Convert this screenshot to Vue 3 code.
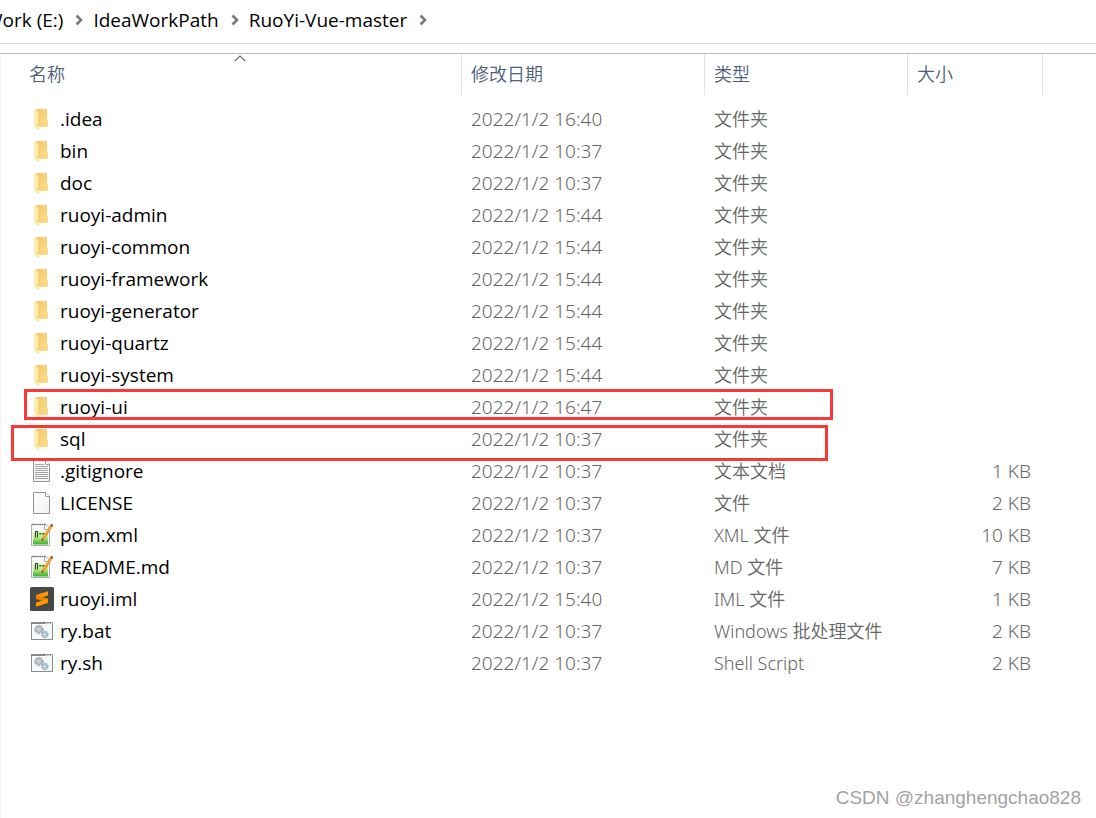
<script setup>
const crumbs = ['Work (E:)', 'IdeaWorkPath', 'RuoYi-Vue-master']

const headers = [
  { label: '名称', key: 'name' },
  { label: '修改日期', key: 'date' },
  { label: '类型', key: 'type' },
  { label: '大小', key: 'size' },
]

const folder = (name, time) => ({ name, time, icon: 'folder', type: '文件夹', size: '' })

const files = [
  folder('.idea', '16:40'),
  folder('bin', '10:37'),
  folder('doc', '10:37'),
  folder('ruoyi-admin', '15:44'),
  folder('ruoyi-common', '15:44'),
  folder('ruoyi-framework', '15:44'),
  folder('ruoyi-generator', '15:44'),
  folder('ruoyi-quartz', '15:44'),
  folder('ruoyi-system', '15:44'),
  folder('ruoyi-ui', '16:47'),
  folder('sql', '10:37'),
  { name: '.gitignore', time: '10:37', icon: 'text', type: '文本文档', size: '1 KB' },
  { name: 'LICENSE', time: '10:37', icon: 'blank', type: '文件', size: '2 KB' },
  { name: 'pom.xml', time: '10:37', icon: 'notepad', type: 'XML 文件', size: '10 KB' },
  { name: 'README.md', time: '10:37', icon: 'notepad', type: 'MD 文件', size: '7 KB' },
  { name: 'ruoyi.iml', time: '15:40', icon: 'sublime', type: 'IML 文件', size: '1 KB' },
  { name: 'ry.bat', time: '10:37', icon: 'script', type: 'Windows 批处理文件', size: '2 KB' },
  { name: 'ry.sh', time: '10:37', icon: 'script', type: 'Shell Script', size: '2 KB' },
]
</script>

<template>
  <div class="explorer">
    <svg class="defs" aria-hidden="true">
      <defs>
        <linearGradient id="folder-back" x1="0" x2="1" y1="0" y2="1">
          <stop offset="0" stop-color="#f0ca6c" />
          <stop offset="1" stop-color="#fbdc85" />
        </linearGradient>
        <linearGradient id="folder-front" x1="0" x2="1" y1="0" y2="0">
          <stop offset="0" stop-color="#fff0b8" />
          <stop offset="1" stop-color="#fbe39a" />
        </linearGradient>
        <linearGradient id="paper" x1="0" x2="1" y1="0" y2="1">
          <stop offset="0" stop-color="#ffffff" />
          <stop offset="1" stop-color="#f0f1f2" />
        </linearGradient>
        <linearGradient id="green" x1="0" x2="0" y1="0" y2="1">
          <stop offset="0" stop-color="#f4fbe6" />
          <stop offset="0.5" stop-color="#c4ec92" />
          <stop offset="1" stop-color="#35b024" />
        </linearGradient>
      </defs>
    </svg>

    <nav class="path" aria-label="Path">
      <template v-for="crumb in crumbs" :key="crumb">
        <a class="crumb" href="#">{{ crumb }}</a>
        <svg class="chevron" viewBox="0 0 8 12" aria-hidden="true">
          <path d="M1.5 1.5 6 6 1.5 10.5" fill="none" stroke="#7a7a7a" stroke-width="2.6" />
        </svg>
      </template>
    </nav>

    <main class="pane">
      <table class="list">
        <colgroup>
          <col class="c-name" /><col class="c-date" /><col class="c-type" /><col class="c-size" /><col />
        </colgroup>
        <thead>
          <tr>
            <th v-for="h in headers" :key="h.key" scope="col">
              <button type="button" class="sort">{{ h.label }}</button>
              <svg v-if="h.key === 'name'" class="caret" viewBox="0 0 12 7" aria-hidden="true">
                <path d="M0.8 6 6 1 11.2 6" fill="none" stroke="#6d6d6d" stroke-width="1.1" />
              </svg>
            </th>
            <td class="rest"></td>
          </tr>
        </thead>
        <tbody>
          <tr v-for="f in files" :key="f.name">
            <td>
              <div class="file">
                <svg class="icon" viewBox="0 0 24 24" aria-hidden="true">
                  <g v-if="f.icon === 'folder'">
                    <path d="M6 2h10.3q.7 0 .7.7V13l1 1.300v5.200q0 .5-.5.5H7z" fill="url(#folder-back)" />
                    <path d="M4 2.300 8.300 5q.7.4.7 1.200V22.500q0 .8-.6.4L4 19.800z" fill="url(#folder-front)" />
                    <path d="M9 6v14" stroke="#e8c368" stroke-width=".6" />
                  </g>
                  <g v-else-if="f.icon === 'text' || f.icon === 'blank'">
                    <path d="M3.500 1.500h12l4 4v17h-16z" fill="url(#paper)" stroke="#929292" />
                    <path d="M15.500 1.500v4h4" fill="#fff" stroke="#a0a0a0" />
                    <path
                      v-if="f.icon === 'text'"
                      d="M5 5.500h9M5 7.500h13M5 9.500h13M5 11.500h13M5 13.500h13M5 15.500h13M5 17.500h13M5 19.500h13"
                      stroke="#a2a2a2"
                      fill="none"
                    />
                  </g>
                  <g v-else-if="f.icon === 'notepad'">
                    <path d="M1.500 1.500H16l3.500 3.500v17.500h-18z" fill="#fbfcfa" stroke="#a9b0b2" />
                    <path d="M2 1.500h14" stroke="#6f7679" stroke-width="1.400" stroke-dasharray="1.300 1.200" />
                    <path d="M14.500 2v4.500h4" fill="#fff" stroke="#9aa0a2" stroke-width=".8" />
                    <path d="M3 7h15v14.500H3z" fill="url(#green)" />
                    <path d="M5.500 14.500v-6h2v6" fill="none" stroke="#31552d" stroke-width="1.200" />
                    <path d="M9.300 10.800h2M12.300 10.800h2" stroke="#31552d" stroke-width="1.600" />
                    <path d="M20.700 1.800 22.700 3 14 16.800l-2.300 1.400.3-2.600z" fill="#f5a72c" stroke="#c8862d" stroke-width=".5" />
                    <path d="m20 2.800 1-1.800q1.600 0 2.200 1.200L22 4.200z" fill="#c24b3c" />
                    <path d="m12 15.600 2 1.200-2.300 1.400z" fill="#6c4b2b" />
                  </g>
                  <g v-else-if="f.icon === 'sublime'">
                    <rect width="24" height="24" rx="1.500" fill="#484848" />
                    <path d="M18 4.200v4.200L6 12V7.900z" fill="#ff9800" />
                    <path d="M6 8v4l12 3.700v-4z" fill="#ee8200" />
                    <path d="M18 11.800V16L6 19.800v-4.200z" fill="#ff9800" />
                  </g>
                  <g v-else>
                    <rect x="1.500" y="3.500" width="21" height="17" fill="#f9fafb" stroke="#858a8e" />
                    <path d="M1 4h22" stroke="#858a8e" stroke-width="2" />
                    <path d="M16 4.300h1.300M18.500 4.300h1.300M21 4.300h1.300" stroke="#fff" stroke-width="1.200" />
                    <circle cx="9" cy="10.500" r="3.900" fill="none" stroke="#929da5" stroke-width="1.500" stroke-dasharray="1.500 .95" />
                    <circle cx="9" cy="10.500" r="2.700" fill="#dfe4e7" stroke="#929da5" stroke-width="1" />
                    <circle cx="9" cy="10.500" r="1" fill="#fff" stroke="#929da5" stroke-width=".6" />
                    <circle cx="14.800" cy="15.500" r="3.100" fill="none" stroke="#84a5b5" stroke-width="1.300" stroke-dasharray="1.300 .65" />
                    <circle cx="14.800" cy="15.500" r="2.100" fill="#e3f0f5" stroke="#84a5b5" stroke-width=".9" />
                    <circle cx="14.800" cy="15.500" r=".7" fill="#fff" stroke="#84a5b5" stroke-width=".5" />
                  </g>
                </svg>
                <span>{{ f.name }}</span>
              </div>
            </td>
            <td class="meta">2022/1/2 {{ f.time }}</td>
            <td class="meta kind">{{ f.type }}</td>
            <td class="meta size">{{ f.size }}</td>
            <td></td>
          </tr>
        </tbody>
      </table>
      <div class="mark mark-ui"></div>
      <div class="mark mark-sql"></div>
      <footer class="credit">CSDN @zhanghengchao828</footer>
    </main>
  </div>
</template>

<style>
body {
  margin: 0;
  background: #fff;
}
</style>

<style scoped>
.explorer {
  box-sizing: border-box;
  min-height: 100vh;
  display: flex;
  flex-direction: column;
  overflow: hidden;
  background: #fff;
  color: #000;
  font-family: "Open Sans", "Noto Sans", "Noto Sans CJK SC", sans-serif;
  font-size: 19px;
  line-height: 32px;
}
.defs {
  position: absolute;
  width: 0;
  height: 0;
}
.path {
  display: flex;
  align-items: center;
  box-sizing: border-box;
  height: 44px;
  margin-left: -15px;
  padding-bottom: 4px;
  border-bottom: 1px solid #d9d9d9;
  white-space: nowrap;
}
.crumb {
  color: #000;
  text-decoration: none;
}
.chevron {
  flex: none;
  width: 8px;
  height: 12px;
  margin: 0 10px 0 12px;
}
.pane {
  position: relative;
  flex: 1;
  display: flex;
  flex-direction: column;
  margin-top: 9px;
  border-top: 1px solid #bcbcbc;
  border-left: 1px solid #f5f5f5;
}
.list {
  width: 100%;
  table-layout: fixed;
  border-collapse: separate;
  border-spacing: 0;
}
.c-name { width: 461px; }
.c-date { width: 243px; }
.c-type { width: 203px; }
.c-size { width: 135px; }
th,
td {
  padding: 0 0 0 9px;
  text-align: left;
  font-weight: 400;
  white-space: nowrap;
}
th {
  position: relative;
  height: 41px;
  border-right: 1px solid #e2e2e2;
}
thead::after {
  content: "";
  display: block;
  height: 8px;
}
th:first-child,
td:first-child {
  padding-left: 28px;
}
.rest {
  padding: 0;
}
.sort {
  display: block;
  padding: 0 0 2px;
  border: 0;
  background: none;
  color: #4c607a;
  font: inherit;
  font-size: 18px;
  font-weight: 350;
  line-height: 32px;
}
.caret {
  position: absolute;
  top: 1px;
  left: 233px;
  width: 12px;
  height: 7px;
}
.file {
  display: flex;
  align-items: center;
  gap: 6px;
  height: 32px;
  padding-left: 1px;
}
.icon {
  flex: none;
  width: 24px;
  height: 24px;
}
.meta {
  color: #666;
  font-family: "Noto Sans", "Noto Sans CJK SC", sans-serif;
  font-weight: 350;
}
.kind {
  font-size: 18px;
}
.size {
  padding-right: 12px;
  text-align: right;
}
.mark {
  position: absolute;
  box-sizing: border-box;
  border: 3px solid #fa3838;
  pointer-events: none;
}
.mark-ui {
  left: 23px;
  top: 335px;
  width: 809px;
  height: 31px;
}
.mark-sql {
  left: 10px;
  top: 371px;
  width: 817px;
  height: 36px;
}
.credit {
  margin-top: auto;
  padding: 0 15px 8px 0;
  text-align: right;
  color: #a3a3a3;
  font-family: "Liberation Sans", sans-serif;
  font-size: 19px;
  line-height: 24px;
}
</style>
